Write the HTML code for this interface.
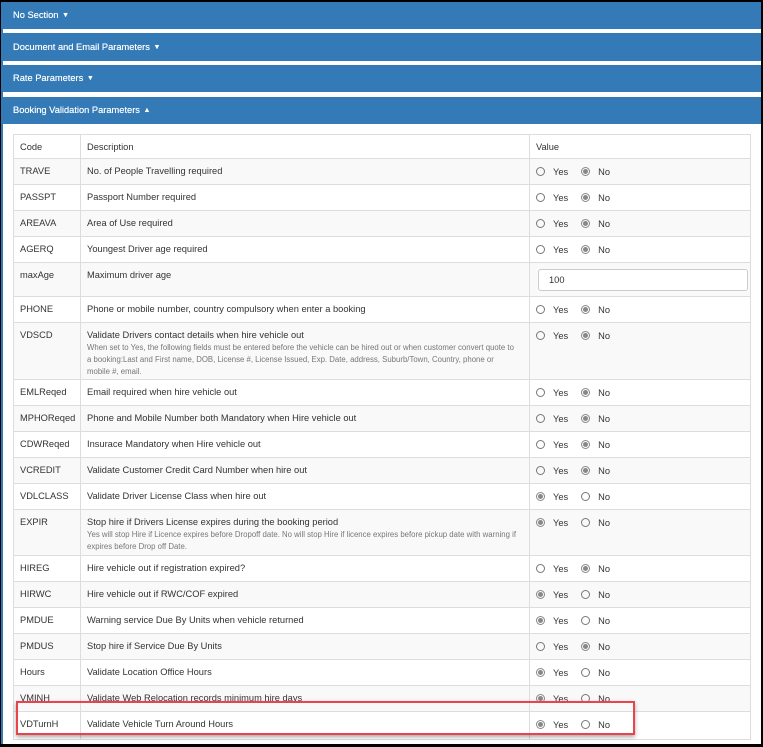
<!DOCTYPE html>
<html><head><meta charset="utf-8"><style>
*{box-sizing:border-box;margin:0;padding:0}
html,body{width:763px;height:747px;overflow:hidden;background:#000;font-family:"Liberation Sans",Arial,sans-serif;font-size:9.3px;color:#333}
#page{position:absolute;left:1px;top:2px;width:760px;height:742px;background:#fff;border-left:2px solid #337ab7}
.hd{position:absolute;left:0;width:758px;background:#337ab7;color:#fff;font-size:9.3px;padding-left:10px;line-height:28px;text-shadow:0 0 .4px #fff}
.hd span{font-size:7px;vertical-align:1px;margin-left:1px}
.tbl{position:absolute;left:10px;top:132px;width:738px;border:1px solid #ddd;border-bottom:none}
.r{position:relative;border-bottom:1px solid #ddd;line-height:12px}
.r.s{background:#f9f9f9}
.c1,.c2,.c3{position:absolute;top:0;bottom:0}
.c1{left:0;width:67px;padding:6px 0 0 6px;border-right:1px solid #ddd}
.c2{left:67px;width:449px;padding:6px 0 0 6px;border-right:1px solid #ddd}
.c3{left:516px;right:0;padding:7px 0 0 6px}
.sub{font-size:7.8px;color:#777;line-height:12px;margin-top:1px;padding-right:12px}
.rd{display:inline-block;width:9px;height:9px;border:1px solid #777;border-radius:50%;vertical-align:-1px;position:relative;margin-right:8px}
.rd.on{border-color:#888}
.rd.on:after{content:"";position:absolute;left:1px;top:1px;width:5px;height:5px;border-radius:50%;background:#888}
.lb{margin-right:13px}
.inp{position:absolute;left:8px;top:6px;width:210px;height:22px;border:1px solid #ccc;border-radius:3px;padding:4px 0 0 10px}
.hl{position:absolute;left:13px;top:699px;width:619px;height:34px;border:2px solid #e8444a;box-shadow:0 2px 4px rgba(0,0,0,.35)}
</style></head><body>
<div id="page">
<div class="hd" style="top:0;height:27px;line-height:27px">No Section <span>▼</span></div>
<div class="hd" style="top:31px;height:28px">Document and Email Parameters <span>▼</span></div>
<div class="hd" style="top:63px;height:27px;line-height:27px">Rate Parameters <span>▼</span></div>
<div class="hd" style="top:95px;height:27px;line-height:27px">Booking Validation Parameters <span>▲</span></div>
<div class="tbl">
<div class="r" style="height:24px"><div class="c1">Code</div><div class="c2">Description</div><div class="c3" style="padding-top:6px">Value</div></div>
<div class="r s" style="height:26px"><div class="c1">TRAVE</div><div class="c2">No. of People Travelling required</div><div class="c3"><i class="rd"></i><span class="lb">Yes</span><i class="rd on"></i>No</div></div>
<div class="r" style="height:26px"><div class="c1">PASSPT</div><div class="c2">Passport Number required</div><div class="c3"><i class="rd"></i><span class="lb">Yes</span><i class="rd on"></i>No</div></div>
<div class="r s" style="height:26px"><div class="c1">AREAVA</div><div class="c2">Area of Use required</div><div class="c3"><i class="rd"></i><span class="lb">Yes</span><i class="rd on"></i>No</div></div>
<div class="r" style="height:26px"><div class="c1">AGERQ</div><div class="c2">Youngest Driver age required</div><div class="c3"><i class="rd"></i><span class="lb">Yes</span><i class="rd on"></i>No</div></div>
<div class="r s" style="height:34px"><div class="c1">maxAge</div><div class="c2">Maximum driver age</div><div class="c3" style="background:#f9f9f9"><div class="inp" style="background:#fff">100</div></div></div>
<div class="r" style="height:26px"><div class="c1">PHONE</div><div class="c2">Phone or mobile number, country compulsory when enter a booking</div><div class="c3"><i class="rd"></i><span class="lb">Yes</span><i class="rd on"></i>No</div></div>
<div class="r s" style="height:57px"><div class="c1">VDSCD</div><div class="c2">Validate Drivers contact details when hire vehicle out<div class="sub">When set to Yes, the following fields must be entered before the vehicle can be hired out or when customer convert quote to a booking:Last and First name, DOB, License #, License Issued, Exp. Date, address, Suburb/Town, Country, phone or mobile #, email.</div></div><div class="c3"><i class="rd"></i><span class="lb">Yes</span><i class="rd on"></i>No</div></div>
<div class="r" style="height:26px"><div class="c1">EMLReqed</div><div class="c2">Email required when hire vehicle out</div><div class="c3"><i class="rd"></i><span class="lb">Yes</span><i class="rd on"></i>No</div></div>
<div class="r s" style="height:26px"><div class="c1">MPHOReqed</div><div class="c2">Phone and Mobile Number both Mandatory when Hire vehicle out</div><div class="c3"><i class="rd"></i><span class="lb">Yes</span><i class="rd on"></i>No</div></div>
<div class="r" style="height:26px"><div class="c1">CDWReqed</div><div class="c2">Insurace Mandatory when Hire vehicle out</div><div class="c3"><i class="rd"></i><span class="lb">Yes</span><i class="rd on"></i>No</div></div>
<div class="r s" style="height:26px"><div class="c1">VCREDIT</div><div class="c2">Validate Customer Credit Card Number when hire out</div><div class="c3"><i class="rd"></i><span class="lb">Yes</span><i class="rd on"></i>No</div></div>
<div class="r" style="height:26px"><div class="c1">VDLCLASS</div><div class="c2">Validate Driver License Class when hire out</div><div class="c3"><i class="rd on"></i><span class="lb">Yes</span><i class="rd"></i>No</div></div>
<div class="r s" style="height:46px"><div class="c1">EXPIR</div><div class="c2">Stop hire if Drivers License expires during the booking period<div class="sub">Yes will stop Hire if Licence expires before Dropoff date. No will stop Hire if licence expires before pickup date with warning if expires before Drop off Date.</div></div><div class="c3"><i class="rd on"></i><span class="lb">Yes</span><i class="rd"></i>No</div></div>
<div class="r" style="height:26px"><div class="c1">HIREG</div><div class="c2">Hire vehicle out if registration expired?</div><div class="c3"><i class="rd"></i><span class="lb">Yes</span><i class="rd on"></i>No</div></div>
<div class="r s" style="height:26px"><div class="c1">HIRWC</div><div class="c2">Hire vehicle out if RWC/COF expired</div><div class="c3"><i class="rd on"></i><span class="lb">Yes</span><i class="rd"></i>No</div></div>
<div class="r" style="height:26px"><div class="c1">PMDUE</div><div class="c2">Warning service Due By Units when vehicle returned</div><div class="c3"><i class="rd on"></i><span class="lb">Yes</span><i class="rd"></i>No</div></div>
<div class="r s" style="height:26px"><div class="c1">PMDUS</div><div class="c2">Stop hire if Service Due By Units</div><div class="c3"><i class="rd"></i><span class="lb">Yes</span><i class="rd on"></i>No</div></div>
<div class="r" style="height:26px"><div class="c1">Hours</div><div class="c2">Validate Location Office Hours</div><div class="c3"><i class="rd on"></i><span class="lb">Yes</span><i class="rd"></i>No</div></div>
<div class="r s" style="height:26px"><div class="c1">VMINH</div><div class="c2">Validate Web Relocation records minimum hire days</div><div class="c3"><i class="rd on"></i><span class="lb">Yes</span><i class="rd"></i>No</div></div>
<div class="r" style="height:28px"><div class="c1">VDTurnH</div><div class="c2">Validate Vehicle Turn Around Hours</div><div class="c3"><i class="rd on"></i><span class="lb">Yes</span><i class="rd"></i>No</div></div>
</div>
<div class="hl" style="left:13px;top:699px"></div>
</div>
</body></html>
